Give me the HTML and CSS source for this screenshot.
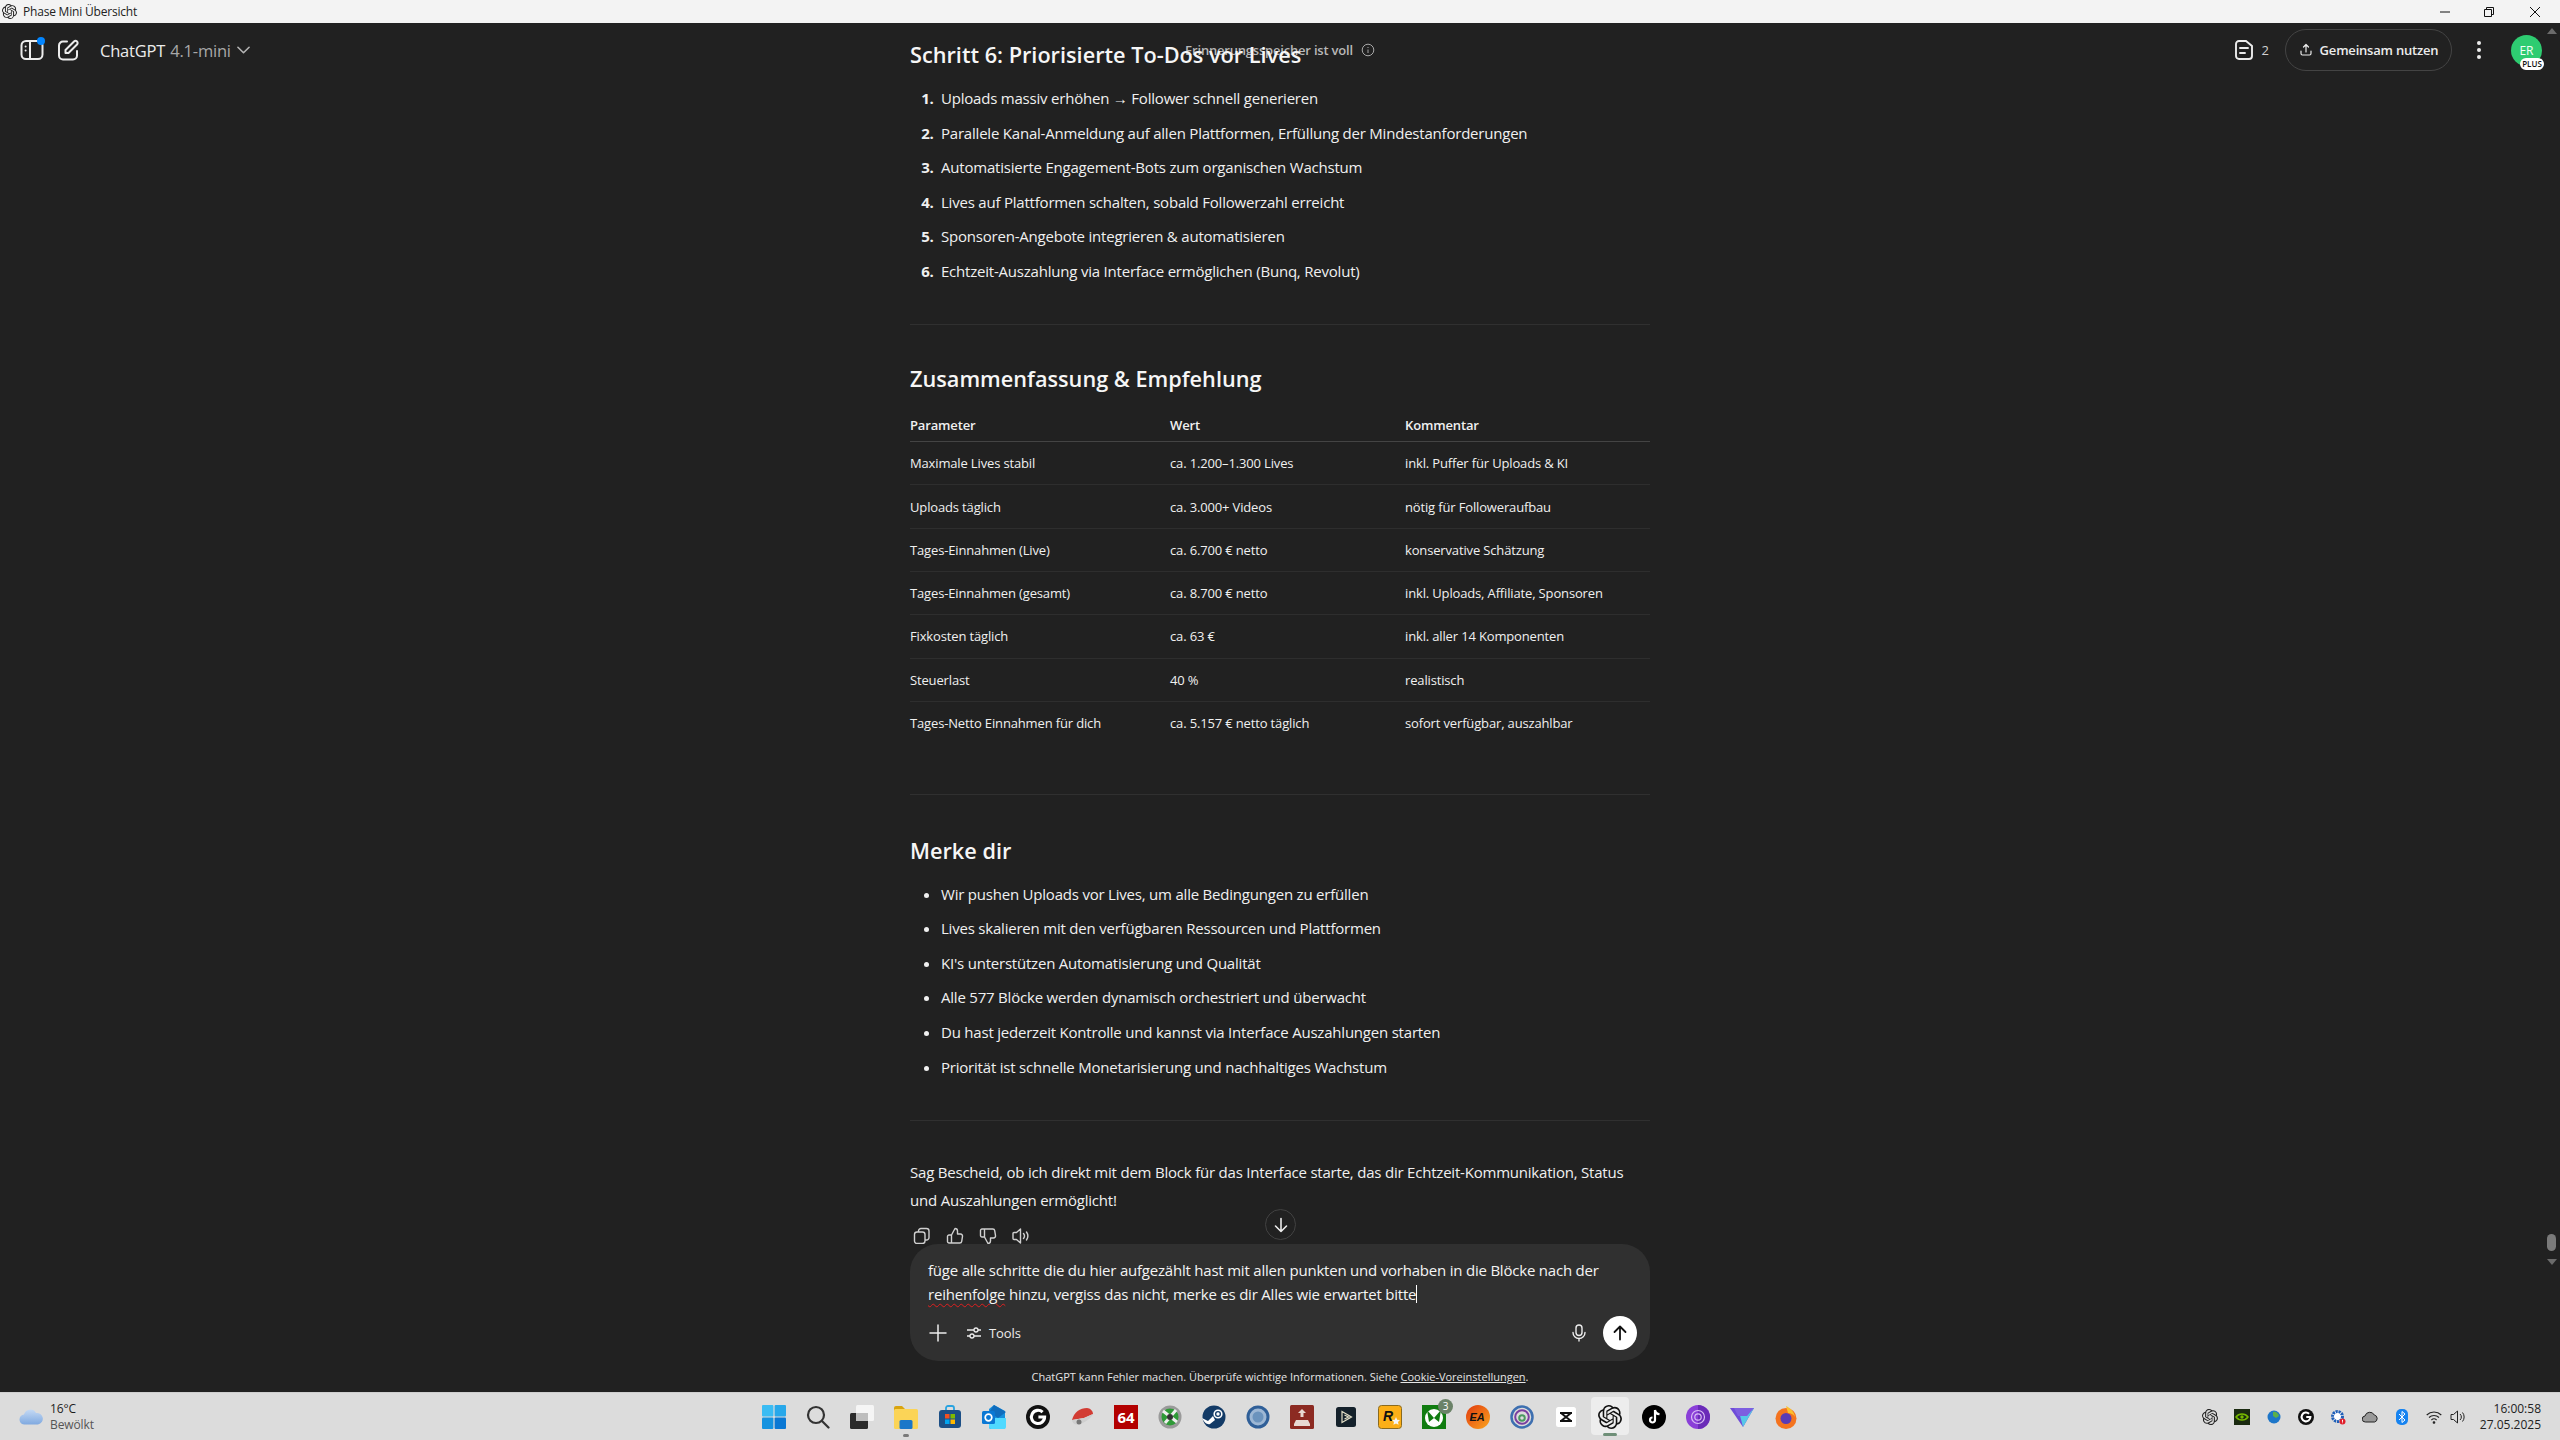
FILE: index.html
```html
<!DOCTYPE html>
<html lang="de">
<head>
<meta charset="utf-8">
<title>Phase Mini Übersicht</title>
<link rel="stylesheet" href="styles.css">
</head>
<body>
<svg class="defs" width="0" height="0" aria-hidden="true">
  <symbol id="openai" viewBox="0 0 24 24"><path fill="currentColor" d="M22.2819 9.8211a5.9847 5.9847 0 0 0-.5157-4.9108 6.0462 6.0462 0 0 0-6.5098-2.9A6.0651 6.0651 0 0 0 4.9807 4.1818a5.9847 5.9847 0 0 0-3.9977 2.9 6.0462 6.0462 0 0 0 .7427 7.0966 5.98 5.98 0 0 0 .511 4.9107 6.051 6.051 0 0 0 6.5146 2.9001A5.9847 5.9847 0 0 0 13.2599 24a6.0557 6.0557 0 0 0 5.7718-4.2058 5.9894 5.9894 0 0 0 3.9977-2.9001 6.0557 6.0557 0 0 0-.7475-7.0729zm-9.022 12.6081a4.4755 4.4755 0 0 1-2.8764-1.0408l.1419-.0804 4.7783-2.7582a.7948.7948 0 0 0 .3927-.6813v-6.7369l2.02 1.1686a.071.071 0 0 1 .038.052v5.5826a4.504 4.504 0 0 1-4.4945 4.4944zm-9.6607-4.1254a4.4708 4.4708 0 0 1-.5346-3.0137l.142.0852 4.783 2.7582a.7712.7712 0 0 0 .7806 0l5.8428-3.3685v2.3324a.0804.0804 0 0 1-.0332.0615L9.74 19.9502a4.4992 4.4992 0 0 1-6.1408-1.6464zM2.3408 7.8956a4.485 4.485 0 0 1 2.3655-1.9728V11.6a.7664.7664 0 0 0 .3879.6765l5.8144 3.3543-2.0201 1.1685a.0757.0757 0 0 1-.071 0l-4.8303-2.7865A4.504 4.504 0 0 1 2.3408 7.872zm16.5963 3.8558L13.1038 8.364 15.1192 7.2a.0757.0757 0 0 1 .071 0l4.8303 2.7913a4.4944 4.4944 0 0 1-.6765 8.1042v-5.6772a.79.79 0 0 0-.407-.667zm2.0107-3.0231l-.142-.0852-4.7735-2.7818a.7759.7759 0 0 0-.7854 0L9.409 9.2297V6.8974a.0662.0662 0 0 1 .0284-.0615l4.8303-2.7866a4.4992 4.4992 0 0 1 6.6802 4.66zM8.3065 12.863l-2.02-1.1638a.0804.0804 0 0 1-.038-.0567V6.0742a4.4992 4.4992 0 0 1 7.3757-3.4537l-.142.0805L8.704 5.459a.7948.7948 0 0 0-.3927.6813zm1.0976-2.3654l2.602-1.4998 2.6069 1.4998v2.9994l-2.5974 1.4997-2.6067-1.4997Z"/></symbol>
  <symbol id="logi" viewBox="0 0 24 24"><circle cx="12" cy="12" r="12" fill="#111"/><path d="M16.6 7.2A6.6 6.6 0 1 0 18.6 12h-6.2" fill="none" stroke="#fff" stroke-width="3.1"/></symbol>
</svg>

<header class="titlebar">
  <svg class="ti-logo"><use href="#openai"/></svg>
  <span class="ti-name">Phase Mini Übersicht</span>
  <div class="win-btns">
    <svg class="wb" viewBox="0 0 12 12"><path d="M1 6h10" stroke="#111" fill="none"/></svg>
    <svg class="wb" viewBox="0 0 12 12"><path d="M1.5 3.5h7v7h-7zM3.5 3.5v-2h7v7h-2" stroke="#111" fill="none"/></svg>
    <svg class="wb" viewBox="0 0 12 12"><path d="M1 1l10 10M11 1L1 11" stroke="#111" fill="none"/></svg>
  </div>
</header>

<main class="app">
  <div class="top">
    <div class="top-left">
      <span class="side-ic">
        <svg class="ic-24" viewBox="0 0 24 24" fill="none" stroke="#ececec" stroke-width="2"><rect x="1.5" y="3" width="21" height="18" rx="4.5"/><path d="M10 3v18"/><circle cx="5.6" cy="8.5" r="1" fill="#ececec" stroke="none"/><circle cx="5.6" cy="12.5" r="1" fill="#ececec" stroke="none"/></svg>
        <i class="dot"></i>
      </span>
      <svg class="ic-24" viewBox="0 0 24 24" fill="none" stroke="#ececec" stroke-width="2" stroke-linecap="round" stroke-linejoin="round"><path d="M11 3.5H7a4 4 0 0 0-4 4v10a4 4 0 0 0 4 4h10a4 4 0 0 0 4-4v-4.500"/><path d="M9.500 15v-3L18 3.500a2.100 2.100 0 0 1 3 3L12.500 15z"/></svg>
      <div class="model">ChatGPT <span class="ver">4.1-mini</span>
        <svg class="chev" viewBox="0 0 14 8" fill="none" stroke="#b4b4b4" stroke-width="1.700" stroke-linecap="round" stroke-linejoin="round"><path d="M1 1l6 6 6-6"/></svg>
      </div>
    </div>
    <div class="memory">Erinnerungsspeicher ist voll
      <svg class="ic-14" viewBox="0 0 14 14" fill="none" stroke="#a8a8a8"><circle cx="7" cy="7" r="5.800"/><path d="M7 6.500v3.500M7 4v1"/></svg>
    </div>
    <div class="top-right">
      <span class="canvas">
        <svg class="ic-22" viewBox="0 0 20 22" fill="none" stroke="#ececec" stroke-width="1.900" stroke-linecap="round"><path d="M5 2h7l6 5v10a3 3 0 0 1-3 3H5a3 3 0 0 1-3-3V5a3 3 0 0 1 3-3z"/><path d="M6 9h8M6 14h5"/></svg>
        2
      </span>
      <button class="share">
        <svg class="ic-14" viewBox="0 0 14 14" fill="none" stroke="#ececec" stroke-width="1.200" stroke-linecap="round" stroke-linejoin="round"><path d="M7 9V1.500M4.500 4L7 1.500 9.500 4M2 8v2.500a1.500 1.500 0 0 0 1.500 1.500h7a1.500 1.500 0 0 0 1.500-1.500V8"/></svg>
        Gemeinsam nutzen
      </button>
      <svg class="kebab" viewBox="0 0 6 20" fill="#ececec"><circle cx="3" cy="3" r="2"/><circle cx="3" cy="10" r="2"/><circle cx="3" cy="17" r="2"/></svg>
      <div class="avatar">ER<span class="plus">PLUS</span></div>
    </div>
  </div>

  <div class="scroll">
    <article class="doc">
      <h2 class="h-first">Schritt 6: Priorisierte To-Dos vor Lives</h2>
      <ol class="list">
        <li>Uploads massiv erhöhen → Follower schnell generieren</li>
        <li>Parallele Kanal-Anmeldung auf allen Plattformen, Erfüllung der Mindestanforderungen</li>
        <li>Automatisierte Engagement-Bots zum organischen Wachstum</li>
        <li>Lives auf Plattformen schalten, sobald Followerzahl erreicht</li>
        <li>Sponsoren-Angebote integrieren &amp; automatisieren</li>
        <li>Echtzeit-Auszahlung via Interface ermöglichen (Bunq, Revolut)</li>
      </ol>
      <hr class="rule rule-a">
      <h2>Zusammenfassung &amp; Empfehlung</h2>
      <table class="tbl">
        <thead><tr><th>Parameter</th><th>Wert</th><th>Kommentar</th></tr></thead>
        <tbody>
          <tr><td>Maximale Lives stabil</td><td>ca. 1.200–1.300 Lives</td><td>inkl. Puffer für Uploads &amp; KI</td></tr>
          <tr><td>Uploads täglich</td><td>ca. 3.000+ Videos</td><td>nötig für Followeraufbau</td></tr>
          <tr><td>Tages-Einnahmen (Live)</td><td>ca. 6.700 € netto</td><td>konservative Schätzung</td></tr>
          <tr><td>Tages-Einnahmen (gesamt)</td><td>ca. 8.700 € netto</td><td>inkl. Uploads, Affiliate, Sponsoren</td></tr>
          <tr><td>Fixkosten täglich</td><td>ca. 63 €</td><td>inkl. aller 14 Komponenten</td></tr>
          <tr><td>Steuerlast</td><td>40 %</td><td>realistisch</td></tr>
          <tr><td>Tages-Netto Einnahmen für dich</td><td>ca. 5.157 € netto täglich</td><td>sofort verfügbar, auszahlbar</td></tr>
        </tbody>
      </table>
      <hr class="rule rule-b">
      <h2>Merke dir</h2>
      <ul class="list">
        <li>Wir pushen Uploads vor Lives, um alle Bedingungen zu erfüllen</li>
        <li>Lives skalieren mit den verfügbaren Ressourcen und Plattformen</li>
        <li>KI's unterstützen Automatisierung und Qualität</li>
        <li>Alle 577 Blöcke werden dynamisch orchestriert und überwacht</li>
        <li>Du hast jederzeit Kontrolle und kannst via Interface Auszahlungen starten</li>
        <li>Priorität ist schnelle Monetarisierung und nachhaltiges Wachstum</li>
      </ul>
      <hr class="rule rule-c">
      <p class="closing">Sag Bescheid, ob ich direkt mit dem Block für das Interface starte, das dir Echtzeit-Kommunikation, Status und Auszahlungen ermöglicht!</p>
      <div class="actions">
        <svg class="ic-18" viewBox="0 0 18 18" fill="none" stroke="#d0d0d0" stroke-width="1.400" stroke-linejoin="round"><rect x="1.500" y="5" width="10.500" height="11.500" rx="2.500"/><path d="M5.500 5V4a2.500 2.500 0 0 1 2.500-2.500h5.500A2.500 2.500 0 0 1 16 4v6.500a2.500 2.500 0 0 1-2.500 2.500H12"/></svg>
        <svg class="ic-18" viewBox="0 0 18 18" fill="none" stroke="#d0d0d0" stroke-width="1.400" stroke-linejoin="round"><path d="M5.500 16H3a1.500 1.500 0 0 1-1.500-1.500v-5A1.500 1.500 0 0 1 3 8h2.500zM5.500 8L9 1.500c1.500 0 2.500 1 2.500 2.500v3h3a2 2 0 0 1 2 2.300l-.8 5A2 2 0 0 1 13.700 16H5.500"/></svg>
        <svg class="ic-18 flip" viewBox="0 0 18 18" fill="none" stroke="#d0d0d0" stroke-width="1.400" stroke-linejoin="round"><path d="M5.500 16H3a1.500 1.500 0 0 1-1.500-1.500v-5A1.500 1.500 0 0 1 3 8h2.500zM5.500 8L9 1.500c1.500 0 2.500 1 2.500 2.500v3h3a2 2 0 0 1 2 2.300l-.8 5A2 2 0 0 1 13.700 16H5.500"/></svg>
        <svg class="ic-18" viewBox="0 0 18 18" fill="none" stroke="#d0d0d0" stroke-width="1.400" stroke-linecap="round" stroke-linejoin="round"><path d="M8.500 2v14L4.500 12.500H2A1 1 0 0 1 1 11.500v-5a1 1 0 0 1 1-1h2.500zM11.500 6.500a4 4 0 0 1 0 5M14.500 5a7 7 0 0 1 0 8"/></svg>
      </div>
    </article>
    <button class="to-bottom" aria-label="Nach unten">
      <svg class="ic-18" viewBox="0 0 18 18" fill="none" stroke="#ececec" stroke-width="1.600" stroke-linecap="round" stroke-linejoin="round"><path d="M9 2.500v13M3.500 10L9 15.500 14.500 10"/></svg>
    </button>
  </div>

  <section class="composer">
    <div class="prompt">füge alle schritte die du hier aufgezählt hast mit allen punkten und vorhaben in die Blöcke nach der <span class="spell">reihenfolge</span> hinzu, vergiss das nicht, merke es dir Alles wie erwartet bitte<i class="caret"></i></div>
    <div class="c-row">
      <svg class="ic-18" viewBox="0 0 18 18" stroke="#ececec" stroke-width="1.500" stroke-linecap="round"><path d="M9 1v16M1 9h16"/></svg>
      <div class="tools">
        <svg class="ic-16" viewBox="0 0 16 16" fill="none" stroke="#ececec" stroke-width="1.300"><path d="M1 5h7M12 5h3M1 11h3M8 11h7"/><circle cx="10" cy="5" r="2"/><circle cx="6" cy="11" r="2"/></svg>
        Tools
      </div>
      <div class="c-end">
        <svg class="ic-18" viewBox="0 0 18 18" fill="none" stroke="#ececec" stroke-width="1.400" stroke-linecap="round"><rect x="6" y="1" width="6" height="10.500" rx="3"/><path d="M3 8.500a6 6 0 0 0 12 0M9 14.500V17"/></svg>
        <button class="send" aria-label="Senden">
          <svg class="ic-18" viewBox="0 0 18 18" fill="none" stroke="#111" stroke-width="1.800" stroke-linecap="round" stroke-linejoin="round"><path d="M9 15.500V2.500M3.500 8L9 2.500 14.500 8"/></svg>
        </button>
      </div>
    </div>
  </section>
  <footer class="note">ChatGPT kann Fehler machen. Überprüfe wichtige Informationen. Siehe <u>Cookie-Voreinstellungen</u>.</footer>

  <div class="sb" aria-hidden="true">
    <i class="sb-up"></i>
    <i class="sb-thumb"></i>
    <i class="sb-down"></i>
  </div>
</main>

<footer class="taskbar">
  <div class="weather">
    <svg class="cloud" viewBox="0 0 24 16"><defs><linearGradient id="cl" x1="0" y1="0" x2="0" y2="1"><stop offset="0" stop-color="#c4d9f4"/><stop offset="1" stop-color="#7fa9e0"/></linearGradient></defs><path fill="url(#cl)" d="M6 15.500a5 5 0 0 1-1-10 6.500 6.500 0 0 1 12-1.500 5.500 5.500 0 0 1 2 11.500z"/></svg>
    <div class="w-txt"><span>16°C</span><span class="w-sub">Bewölkt</span></div>
  </div>
  <div class="apps">
    <span class="slot"><svg class="app-ic" viewBox="0 0 24 24"><g fill="#1b93e3"><rect x="0" y="0" width="11.400" height="11.400" rx="1" fill="#3bbcf3"/><rect x="12.600" y="0" width="11.400" height="11.400" rx="1" fill="#28a8ea"/><rect x="0" y="12.600" width="11.400" height="11.400" rx="1" fill="#1593e0"/><rect x="12.600" y="12.600" width="11.400" height="11.400" rx="1" fill="#0a78d4"/></g></svg></span>
    <span class="slot"><svg class="app-ic" viewBox="0 0 24 24" fill="none" stroke="#333" stroke-width="2.200" stroke-linecap="round"><circle cx="10" cy="10" r="8"/><path d="M16 16l6.500 6.500"/></svg></span>
    <span class="slot"><svg class="app-ic" viewBox="0 0 24 24"><rect x="6" y="0" width="18" height="16" rx="1.500" fill="#f5f5f5"/><rect x="0" y="8" width="18" height="16" rx="1.500" fill="#2a2a2a"/><rect x="6" y="8" width="12" height="8" fill="#bdbdbd"/></svg></span>
    <span class="slot is-open"><svg class="app-ic" viewBox="0 0 24 24"><path d="M0 3a2 2 0 0 1 2-2h6l3 3v4H0z" fill="#d9a40f"/><rect x="0" y="4" width="24" height="20" rx="1.500" fill="#fbd457"/><rect x="8" y="15" width="13" height="9" rx="1.500" fill="#1a77c9" transform="translate(-2.500 0)"/></svg></span>
    <span class="slot"><svg class="app-ic" viewBox="0 0 24 24"><path d="M8 5V3a2 2 0 0 1 2-2h4a2 2 0 0 1 2 2v2" fill="none" stroke="#29a3e0" stroke-width="1.800"/><rect x="1" y="5" width="22" height="18" rx="3" fill="#1c4f86"/><rect x="7" y="9" width="4.500" height="4.500" fill="#f25022"/><rect x="12.500" y="9" width="4.500" height="4.500" fill="#7fba00"/><rect x="7" y="14.500" width="4.500" height="4.500" fill="#00a4ef"/><rect x="12.500" y="14.500" width="4.500" height="4.500" fill="#ffb900"/></svg></span>
    <span class="slot"><svg class="app-ic" viewBox="0 0 24 24"><path d="M12 0l11 6v16a2 2 0 0 1-2 2H9a2 2 0 0 1-2-2V4z" fill="#1490df"/><path d="M12 0l12 7-8 6-9-6z" fill="#0f6cbd"/><path d="M7 13h17v9a2 2 0 0 1-2 2H9a2 2 0 0 1-2-2z" fill="#50d9ff"/><rect x="0" y="6" width="13" height="13" rx="1.500" fill="#0a78d4"/><circle cx="6.500" cy="12.500" r="3.300" fill="none" stroke="#fff" stroke-width="1.700"/></svg></span>
    <span class="slot"><svg class="app-ic"><use href="#logi"/></svg></span>
    <span class="slot"><svg class="app-ic" viewBox="0 0 24 24"><path d="M2 15C4 7 10 3 17 3c3 0 6 3 6 6l-9 4z" fill="#d23c33"/><path d="M2 15l12-2 9-4c-2 4-7 8-13 10-3 1-7 1-8-4z" fill="#cfcfcf"/><circle cx="9" cy="17" r="2.500" fill="#777"/></svg></span>
    <span class="slot"><span class="badge64">64</span></span>
    <span class="slot"><svg class="app-ic" viewBox="0 0 24 24"><circle cx="12" cy="12" r="11.500" fill="#9a9a9a"/><circle cx="12" cy="12" r="8.500" fill="#2f9a37"/><path d="M5 6l14 11M18 5L7 18" stroke="#eee" stroke-width="3"/><circle cx="12" cy="12" r="3" fill="#333"/></svg></span>
    <span class="slot"><svg class="app-ic" viewBox="0 0 24 24"><circle cx="12" cy="12" r="11.500" fill="#123a66"/><circle cx="16" cy="9" r="3.800" fill="none" stroke="#fff" stroke-width="1.600"/><circle cx="16" cy="9" r="1.700" fill="#fff"/><path d="M0 13l6 3 5-5 2 4-5 4c-3 1-6-2-8-6z" fill="#fff"/></svg></span>
    <span class="slot"><svg class="app-ic" viewBox="0 0 24 24"><circle cx="12" cy="12" r="11.500" fill="#2f5f98"/><circle cx="12" cy="12" r="8.500" fill="#9db7d4"/><circle cx="12" cy="12" r="5.500" fill="#6b93bd"/></svg></span>
    <span class="slot"><svg class="app-ic" viewBox="0 0 24 24"><rect width="24" height="24" rx="1.500" fill="#8c2a22"/><path d="M12 4l4 4h-2.500v4h-3V8H8zM6 15h12l2 4v2H4v-2z" fill="#e8d9d2"/></svg></span>
    <span class="slot"><svg class="app-ic sm" viewBox="0 0 20 20"><rect width="20" height="20" rx="2.500" fill="#14212b"/><path d="M6 4.500L15.500 10 6 15.500zM8.500 8L12.500 10 8.500 12" fill="none" stroke="#e4e0c8" stroke-width="1.200"/></svg></span>
    <span class="slot"><svg class="app-ic" viewBox="0 0 24 24"><rect x=".5" y=".5" width="23" height="23" rx="3" fill="#fcaf17" stroke="#8a6a1e"/><text class="rock" x="5" y="16">R</text><path d="M18 12l1.200 2.700 2.800.3-2 2 .6 2.800-2.600-1.400-2.600 1.400.6-2.800-2-2 2.800-.3z" fill="#f5f5f5"/></svg></span>
    <span class="slot"><svg class="app-ic" viewBox="0 0 24 24"><rect width="24" height="24" fill="#107c10"/><circle cx="12" cy="13" r="9" fill="#fff"/><path d="M5 5l7 8 7-8-2 12-5-4-5 4z" fill="#107c10"/></svg><i class="xbadge">3</i></span>
    <span class="slot"><svg class="app-ic" viewBox="0 0 24 24"><defs><linearGradient id="ea" x1="0" y1="0" x2="1" y2="1"><stop offset="0" stop-color="#e13a0f"/><stop offset="1" stop-color="#fba51e"/></linearGradient></defs><circle cx="12" cy="12" r="12" fill="url(#ea)"/><text class="eatxt" x="3.500" y="16">EA</text></svg></span>
    <span class="slot"><svg class="app-ic" viewBox="0 0 24 24" fill="none"><circle cx="12" cy="12" r="10.500" stroke="#3d6fb0" stroke-width="2.500"/><circle cx="12" cy="12" r="6.800" stroke="#7a3fa0" stroke-width="2"/><circle cx="12" cy="13" r="2.800" stroke="#4a9a60" stroke-width="2"/></svg></span>
    <span class="slot"><svg class="app-ic sm" viewBox="0 0 20 20"><rect width="20" height="20" rx="2.500" fill="#fff"/><path d="M4 6h12M4 14h12M5 6l10 8M15 6L5 14" stroke="#111" stroke-width="2"/></svg></span>
    <span class="slot is-active"><svg class="app-ic"><use href="#openai"/></svg></span>
    <span class="slot"><svg class="app-ic" viewBox="0 0 24 24"><circle cx="12" cy="12" r="12" fill="#000"/><path d="M13 5v10a2.500 2.500 0 1 1-2.500-2.500M13 5c.3 2.500 2 4 4.500 4.200" fill="none" stroke="#fff" stroke-width="2.200"/></svg></span>
    <span class="slot"><svg class="app-ic" viewBox="0 0 24 24"><circle cx="12" cy="12" r="12" fill="#8a3fd8"/><path d="M12 0a12 12 0 0 1 0 24z" fill="#6a2bb8"/><circle cx="12" cy="12" r="6.500" fill="none" stroke="#d9bdf5" stroke-width="1.200"/><circle cx="12" cy="12" r="3.200" fill="none" stroke="#d9bdf5" stroke-width="1.200"/></svg></span>
    <span class="slot"><svg class="app-ic" viewBox="0 0 24 24"><path d="M0 3h24L13 22z" fill="#6e4bd8"/><path d="M8 3h16L13 22z" fill="#56c8e8"/><path d="M4 3h20l-7 8H8z" fill="#7d5ee0"/></svg></span>
    <span class="slot"><svg class="app-ic" viewBox="0 0 24 24"><circle cx="12" cy="13.500" r="10.500" fill="#f4731f"/><path d="M12 1c4 2 8 5 9 11-2-3-4-4-7-4z" fill="#fbc02d"/><circle cx="12" cy="13.500" r="5.500" fill="#5a3bb5"/></svg></span>
  </div>
  <div class="tray">
    <svg class="tr"><use href="#openai"/></svg>
    <svg class="tr" viewBox="0 0 16 16"><rect width="16" height="16" fill="#1a2a10"/><path d="M2 8c3-4 9-4 12 0-3 4-9 4-12 0z" fill="none" stroke="#76b900" stroke-width="1.500"/><circle cx="8" cy="8" r="1.700" fill="#76b900"/></svg>
    <svg class="tr" viewBox="0 0 16 16"><circle cx="8" cy="8" r="6.500" fill="#1d76c9"/><path d="M7 3c3-1 5 1 6 4l-3 2-3-2z" fill="#5cb04a"/></svg>
    <svg class="tr"><use href="#logi"/></svg>
    <svg class="tr" viewBox="0 0 16 16"><circle cx="7.500" cy="7.500" r="5" fill="#fff" stroke="#1f5fb8" stroke-width="3" stroke-dasharray="2.200 .8"/><circle cx="12.500" cy="12.500" r="3" fill="#e0202c"/><path d="M12.500 10.800v2M12.500 13.500v.7" stroke="#fff"/></svg>
    <svg class="tr" viewBox="0 0 16 16"><path d="M3.500 13a3 3 0 0 1-.5-6 5 5 0 0 1 9.300-1A3.600 3.600 0 0 1 12.500 13z" fill="#999" stroke="#222"/></svg>
    <svg class="tr bt" viewBox="0 0 12 16"><rect width="12" height="16" rx="5" fill="#1683f0"/><path d="M3 5l6 6-3 2.500v-11L9 5l-6 6" fill="none" stroke="#fff"/></svg>
    <svg class="tr" viewBox="0 0 16 16" fill="none" stroke="#222" stroke-width="1.100"><path d="M.7 6a10.500 10.500 0 0 1 14.600 0M3 8.500a7.200 7.200 0 0 1 10 0M5.400 11a3.800 3.800 0 0 1 5.200 0"/><circle cx="8" cy="13.500" r=".8" fill="#222"/></svg>
    <svg class="tr vol" viewBox="0 0 16 16" fill="none" stroke="#222"><path d="M1 5.500h2.500L7.500 2v12l-4-3.500H1zM10 5a4 4 0 0 1 0 6M12.500 3.500a7 7 0 0 1 0 9"/></svg>
    <div class="clock"><span>16:00:58</span><span>27.05.2025</span></div>
  </div>
</footer>
</body>
</html>
```
FILE: styles.css
```css
* { box-sizing: border-box; }
html, body { margin: 0; height: 100%; }
body {
  width: 2560px; height: 1440px; overflow: hidden;
  display: flex; flex-direction: column;
  font-family: "Open Sans", "Noto Sans", sans-serif;
  background: #212121;
}
.defs { position: absolute; }

.titlebar {
  height: 23px; background: #f3f3f3; color: #222;
  display: flex; align-items: center; padding-left: 2px;
  font-size: 12px; letter-spacing: -0.2px; flex: none;
}
.ti-logo { width: 15px; height: 15px; color: #222; margin-right: 6px; }
.win-btns { margin-left: auto; display: flex; gap: 32px; padding-right: 19px; }
.wb { width: 12px; height: 12px; }
.wb:last-child { margin-left: 2px; }

.app { flex: none; height: 1369px; position: relative; display: flex; flex-direction: column; background: #212121; color: #f0f0f0; }

.top { position: absolute; left: 0; right: 0; top: 0; height: 54px; display: flex; align-items: center; padding: 0 18px 0 20px; }
.top-left { display: flex; align-items: center; gap: 12px; }
.ic-24 { width: 24px; height: 24px; display: block; }
.ic-22 { width: 20px; height: 22px; display: block; }
.ic-18 { width: 18px; height: 18px; display: block; flex: none; }
.ic-16 { width: 16px; height: 16px; display: block; }
.ic-14 { width: 14px; height: 14px; display: block; flex: none; }
.side-ic { position: relative; display: block; }
.dot { position: absolute; right: -1px; top: -1px; width: 8px; height: 8px; border-radius: 50%; background: #0285ff; }
.model { font-size: 16.500px; letter-spacing: -0.2px; margin-left: 8px; color: #ececec; display: flex; align-items: center; gap: 5px; }
.ver { color: #a8a8a8; }
.chev { width: 13px; height: 8px; margin-left: 1px; }

.memory { position: absolute; left: 1185px; top: 19px; display: flex; align-items: center; gap: 8px; font-size: 13px; letter-spacing: -0.2px; font-weight: 600; color: #b8b8b8; white-space: nowrap; line-height: 16px; }
.top-right { margin-left: auto; display: flex; align-items: center; }
.canvas { display: flex; align-items: center; gap: 8px; font-size: 13px; color: #d0d0d0; margin-right: 16px; }
.share { height: 42px; width: 167px; border-radius: 21px; background: transparent; border: 1px solid #444; color: #ececec; font: 600 13px "Open Sans", sans-serif; letter-spacing: -0.2px; display: flex; align-items: center; justify-content: center; gap: 7px; padding: 0; white-space: nowrap; }
.kebab { width: 6px; height: 20px; margin-left: 24px; margin-right: 29px; }
.avatar { position: relative; width: 31px; height: 31px; border-radius: 50%; background: #2ecc71; color: #f2fff7; font-size: 12px; display: flex; align-items: center; justify-content: center; }
.plus { position: absolute; left: 9px; top: 23px; width: 24px; height: 12px; background: #fff; color: #111; border-radius: 6px; font-size: 8px; font-weight: 600; line-height: 12px; text-align: center; }

.scroll { flex: none; height: 1221px; overflow: hidden; position: relative; }
.doc { width: 740px; margin: 0 auto; padding-top: 17px; font-size: 15px; letter-spacing: -0.21px; }
h2 { margin: 0; font-size: 21.700px; letter-spacing: 0; font-weight: 600; line-height: 30px; color: #f6f6f6; }
.list { margin: 11px 0 0; padding: 0 0 0 31px; }
.list li { height: 34.6px; line-height: 34.6px; white-space: nowrap; }
ol.list li::marker { font-weight: 700; content: counter(list-item) ".  "; }
.rule { border: 0; height: 1px; background: #303030; margin: 0; }
.rule-a { margin-top: 35px; margin-bottom: 39px; }
.rule-b { margin-top: 49px; margin-bottom: 41px; }
.rule-c { margin-top: 36px; margin-bottom: 37px; }
.tbl { width: 740px; margin-top: 19px; border-collapse: collapse; table-layout: fixed; font-size: 13px; letter-spacing: -0.15px; }
.tbl th:nth-child(1) { width: 260px; }
.tbl th:nth-child(2) { width: 235px; }
.tbl th { text-align: left; font-weight: 600; height: 29px; padding: 0 0 4px; border-bottom: 1px solid #444; vertical-align: middle; }
.tbl td { height: 43.3px; padding: 0; border-bottom: 1px solid #2e2e2e; }
.tbl tr:last-child td { border-bottom: 0; }
.closing { margin: 0; line-height: 28px; }
.actions { display: flex; gap: 15px; margin-top: 13px; padding-left: 3px; }
.flip { transform: rotate(180deg) scaleX(-1); }
.to-bottom { position: absolute; left: 1265px; top: 1186px; width: 31px; height: 31px; border-radius: 50%; background: #212121; border: 1px solid #424242; display: flex; align-items: center; justify-content: center; padding: 0; }

.composer { flex: none; width: 740px; height: 117px; margin: 0 auto; border-radius: 28px; background: #303030; padding: 14px 18px 11px; display: flex; flex-direction: column; position: relative; }
.prompt { font-size: 15px; letter-spacing: -0.21px; line-height: 24px; color: #f4f4f4; }
.spell { text-decoration: underline wavy #e02020 1px; text-underline-offset: 3px; }
.caret { display: inline-block; width: 1px; height: 18px; background: #fff; vertical-align: -3px; }
.c-row { margin-top: auto; display: flex; align-items: center; height: 34px; padding-left: 1px; }
.tools { display: flex; align-items: center; gap: 7px; font-size: 13px; letter-spacing: -0.1px; margin-left: 19px; color: #ececec; }
.c-end { margin-left: auto; display: flex; align-items: center; gap: 15px; margin-right: -5px; }
.send { width: 34px; height: 34px; border-radius: 50%; background: #fff; border: 0; display: flex; align-items: center; justify-content: center; padding: 0; }
.note { flex: none; height: 31px; display: flex; align-items: center; justify-content: center; font-size: 11px; color: #e6e6e6; white-space: pre-wrap; }

.sb { position: absolute; right: 3px; top: 0; bottom: 0; width: 10px; }
.sb-up, .sb-down, .sb-thumb { position: absolute; display: block; left: 0; }
.sb-up { top: 5px; border: 5px solid transparent; border-top: 0; border-bottom: 6px solid #6b6b6b; }
.sb-thumb { top: 1211px; width: 9px; height: 17px; border-radius: 5px; background: #7a7a7a; }
.sb-down { top: 1236px; border: 5px solid transparent; border-bottom: 0; border-top: 6px solid #6b6b6b; }

.taskbar { flex: none; height: 48px; background: #dcdcdc; border-top: 1px solid #cfcfcf; position: relative; display: grid; grid-template-columns: 1fr auto 1fr; align-items: center; color: #1c1c1c; font-size: 12px; }
.weather { display: flex; align-items: center; gap: 7px; padding-left: 19px; }
.cloud { width: 24px; height: 16px; }
.w-txt { display: flex; flex-direction: column; line-height: 16px; font-size: 12px; letter-spacing: -0.1px; }
.w-sub { color: #555; }
.apps { display: flex; }
.slot { width: 44px; height: 47px; display: flex; align-items: center; justify-content: center; position: relative; }
.app-ic { width: 24px; height: 24px; display: block; color: #111; }
.app-ic.sm { width: 20px; height: 20px; }
.is-open::after { content: ""; position: absolute; left: 19px; bottom: 3px; width: 6px; height: 3px; border-radius: 2px; background: #7a7a7a; }
.is-active::before { content: ""; position: absolute; left: 3px; top: 4px; width: 38px; height: 38px; border-radius: 4px; background: #ededed; }
.is-active::after { content: ""; position: absolute; left: 15px; bottom: 4px; width: 14px; height: 3px; border-radius: 2px; background: #6f8f78; }
.is-active .app-ic { position: relative; }
.badge64 { width: 24px; height: 24px; background: #b30000; color: #fff; font: 700 15px/24px "Open Sans", sans-serif; text-align: center; }
.rock { font: italic 700 14px "Liberation Sans", sans-serif; fill: #111; }
.eatxt { font: italic 800 11px "Liberation Sans", sans-serif; fill: #111; }
.xbadge { position: absolute; left: 26px; top: 6px; width: 15px; height: 15px; border-radius: 50%; background: #6b8268; color: #fff; font: 400 10px/15px "Open Sans", sans-serif; text-align: center; }
.tray { justify-self: end; display: flex; align-items: center; gap: 16px; padding-right: 19px; }
.tr { width: 16px; height: 16px; display: block; color: #222; }
.bt { width: 12px; margin: 0 2px; }
.vol { margin-left: -8px; }
.clock { display: flex; flex-direction: column; align-items: flex-end; line-height: 16px; margin-left: -2px; font-size: 12px; color: #222; }
```
